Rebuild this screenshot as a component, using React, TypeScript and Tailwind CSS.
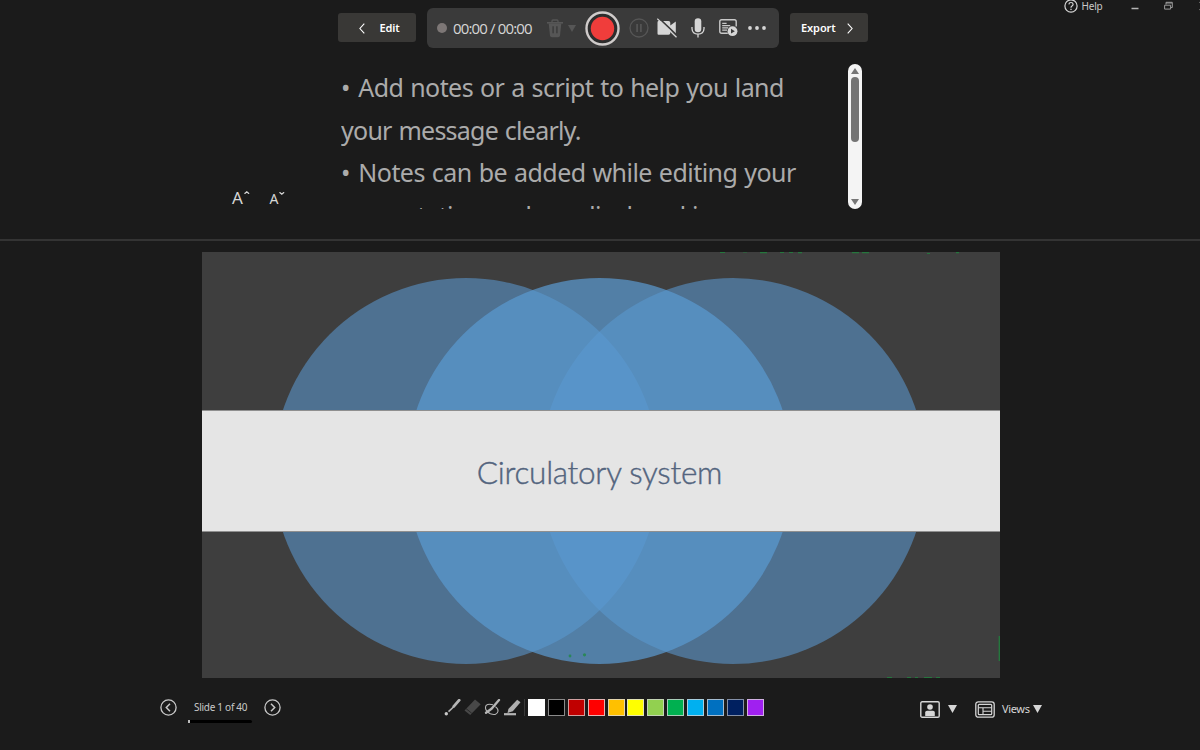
import type { ReactNode } from "react"

const inks = [
  { name: "White", fill: "bg-white", border: "border-white" },
  { name: "Black", fill: "bg-black", border: "border-[#8a8a8a]" },
  { name: "Dark red", fill: "bg-[#c00000]", border: "border-[#d0a0a0]" },
  { name: "Red", fill: "bg-[#ff0000]", border: "border-[#e4b4b4]" },
  { name: "Orange", fill: "bg-[#ffc000]", border: "border-[#e4d6ae]" },
  { name: "Yellow", fill: "bg-[#ffff00]", border: "border-[#e4e4b4]" },
  { name: "Light green", fill: "bg-[#92d050]", border: "border-[#c4d4b4]" },
  { name: "Green", fill: "bg-[#00b050]", border: "border-[#a8cdb8]" },
  { name: "Light blue", fill: "bg-[#00b0f0]", border: "border-[#a8cede]" },
  { name: "Blue", fill: "bg-[#0070c0]", border: "border-[#a4bcd0]" },
  { name: "Dark blue", fill: "bg-[#002060]", border: "border-[#8490a8]" },
  { name: "Purple", fill: "bg-[#a020f0]", border: "border-[#d0b0e2]" },
]

function Caret({ className }: { className: string }) {
  return (
    <svg className={className} viewBox="0 0 8 8" preserveAspectRatio="none" fill="currentColor">
      <path d="M0 0h8L4 8z" />
    </svg>
  )
}

function ArrowCircle({ flip = false }: { flip?: boolean }) {
  return (
    <svg
      className={flip ? "size-[17px] rotate-180" : "size-[17px]"}
      viewBox="0 0 17 17"
      fill="none"
      stroke="#c9c9c9"
      strokeWidth={1.3}
    >
      <circle cx="8.5" cy="8.5" r="7.6" />
      <path d="M10 4.7 6.3 8.5 10 12.3" strokeWidth={1.5} />
    </svg>
  )
}

function NavButton({ children }: { children: ReactNode }) {
  return (
    <button className="mt-[13px] flex h-[29px] w-[78px] shrink-0 items-center rounded-[3px] bg-[#393836] pt-px font-['Noto_Sans'] text-[11px] font-semibold tracking-[-0.1px] text-white">
      {children}
    </button>
  )
}

function Toolbar() {
  return (
    <div className="mr-[11px] mt-2 ml-[11px] flex h-[40px] w-[352px] shrink-0 items-center rounded-md bg-[#3a3a3a]">
      <span className="ml-[9.5px] size-[10.5px] shrink-0 rounded-full bg-[#7d7776]" />
      <span className="ml-[6px] w-[93.5px] shrink-0 whitespace-nowrap pt-px font-['Open_Sans'] text-[15px] tracking-[-0.85px] text-[#d6d6d6]">
        00:00 / 00:00
      </span>
      <svg className="h-[19px] w-4 shrink-0" viewBox="0 0 16 19" fill="none">
        <path d="M5 3.5V2Q5 1 6 1h4q1 0 1 1v1.5" stroke="#565656" strokeWidth={1.3} />
        <path d="M0 3h16v1.6H0z" fill="#565656" />
        <path d="M1.7 4.5h12.6L13 16.4q-.2 1.8-2 1.8H5q-1.8 0-2-1.8z" fill="#565656" />
        <path d="M6.1 7.2v7M9.9 7.2v7" stroke="#3a3a3a" strokeWidth={1.4} />
      </svg>
      <Caret className="ml-[5px] h-[7px] w-2 shrink-0 text-[#565656]" />
      <svg className="ml-[9px] size-[35px] shrink-0" viewBox="0 0 35 35">
        <circle cx="17.5" cy="17.5" r="16" fill="#2d2d2d" stroke="#cfcbca" strokeWidth={2.4} />
        <circle cx="17.5" cy="17.5" r="11.7" fill="#f03d3b" />
      </svg>
      <svg className="ml-[9px] size-5 shrink-0" viewBox="0 0 20 20" fill="none" stroke="#565656">
        <circle cx="10" cy="10" r="9" strokeWidth={1.3} />
        <path d="M8.1 6v8M11.9 6v8" strokeWidth={1.7} />
      </svg>
      <svg className="ml-[8.5px] h-5 w-5 shrink-0" viewBox="0 0 20 20">
        <path d="M1.5 3h10q1.8 0 1.8 1.8v2.8L18.8 3.4v13L13.3 12.8V15q0 1.8-1.8 1.8h-10Q.5 16.8.5 15.4V4.4Q.5 3 1.5 3z" fill="#d6d6d6" />
        <path d="M.9-.9 20.9 18.3" stroke="#3a3a3a" strokeWidth={1.6} />
        <path d="M.3.6 19.5 19.2" stroke="#d6d6d6" strokeWidth={1.3} />
      </svg>
      <svg className="ml-[13.5px] h-5 w-[14px] shrink-0" viewBox="0 0 14 20" fill="none">
        <rect x="3.7" y="0.3" width="6.6" height="14" rx="3.3" fill="#d6d6d6" />
        <path d="M1 9v1.8Q1.3 16 7 16.2 12.7 16 13 10.8V9M7 16v3.6" stroke="#d6d6d6" strokeWidth={1.3} />
      </svg>
      <svg className="ml-[14px] h-[18px] w-[19px] shrink-0" viewBox="0 0 19 18" fill="none" stroke="#c9c9c9">
        <path d="M8.8 14.2H2.6Q.8 14.2.8 12.4V2.6Q.8.8 2.6.8h12.8q1.8 0 1.8 1.8v5" strokeWidth={1.4} />
        <path d="M3.2 4.3h4.4M3.2 6.6h8M3.2 8.9h6M3.2 11.2h4.8" strokeWidth={1.2} />
        <circle cx="13.5" cy="12.2" r="4.9" fill="#d6d6d6" stroke="none" />
        <path d="M12 9.8v4.8l3.8-2.4z" fill="#3a3a3a" stroke="none" />
      </svg>
      <svg className="ml-2.5 h-1 w-[18px] shrink-0" viewBox="0 0 18 4" fill="#d6d6d6">
        <circle cx="2" cy="2" r="1.9" />
        <circle cx="9" cy="2" r="1.9" />
        <circle cx="16" cy="2" r="1.9" />
      </svg>
    </div>
  )
}

function WindowControls() {
  return (
    <div className="ml-[196px] flex h-[12px] items-center text-[#c9c9c9]">
      <svg className="size-[14px] shrink-0" viewBox="0 0 14 14" fill="none" stroke="#d6d6d6">
        <circle cx="7" cy="7" r="6.1" strokeWidth={1.2} />
        <path d="M4.9 5.4Q5 3.5 7 3.5t2.1 1.8Q9.1 6.4 8 7.1T7 8.8" strokeWidth={1.2} />
        <path d="M7 9.8v1.3" strokeWidth={1.3} />
      </svg>
      <span className="ml-[3.5px] w-[49px] shrink-0 pt-px font-['Noto_Sans'] text-[10px] tracking-[-0.2px]">Help</span>
      <svg className="h-3 w-2 shrink-0" viewBox="0 0 8 12">
        <path d="M.5 8.5h7" stroke="#b5b5b5" strokeWidth={1.5} />
      </svg>
      <svg className="ml-[25px] h-[10px] w-[9px] shrink-0" viewBox="0 0 9 10" fill="none" stroke="#9a9a9a">
        <path d="M2 3.5V1.3h6.3v5.2H7M2 2h6" />
        <path d="M.6 4.2h6v3.9h-6z" />
      </svg>
      <svg className="ml-[26px] h-[10px] w-[5px] shrink-0" viewBox="0 0 5 10">
        <path d="m0 1 5 4-5 4" fill="none" stroke="#6a6a6a" />
      </svg>
    </div>
  )
}

function Notes() {
  return (
    <section className="flex h-[179px] pl-[232px] pt-1">
      <div className="flex h-[145px] w-[109px] shrink-0 items-end font-['Noto_Sans'] text-[#d6d6d6]">
        <button className="flex w-[37.5px] items-start text-[17px] leading-[22px]">
          A
          <svg className="mt-[4px] ml-px h-[3px] w-[6px]" viewBox="0 0 6 3" fill="none" stroke="currentColor">
            <path d="m.5 2.8 2.3-2L5.1 2.8" strokeWidth={1.2} />
          </svg>
        </button>
        <button className="flex items-start text-[14px] leading-5">
          A
          <svg className="mt-[3px] ml-px h-[3px] w-[6px]" viewBox="0 0 6 3" fill="none" stroke="currentColor">
            <path d="m.5.2 2.3 2L5.1.2" strokeWidth={1.2} />
          </svg>
        </button>
      </div>
      <div className="h-[145px] w-[507px] shrink-0 overflow-hidden whitespace-nowrap pt-[2px] font-['Noto_Sans'] text-[25px] leading-[43px] tracking-[-0.57px] [word-spacing:1px] text-[#ababab]">
        <p>
          <span className="mr-[1.5px]">•</span> Add notes or a script to help you land
        </p>
        <p className="tracking-[-0.75px]">your message clearly.</p>
        <p className="-mt-px tracking-[-0.54px]">
          <span className="mr-[1.5px]">•</span> Notes can be added while editing your
        </p>
        <p className="tracking-[-0.76px]">presentation and are displayed in</p>
      </div>
      <div className="flex h-[145px] w-[14px] flex-col items-center rounded-full bg-[#f4f4f4] py-1 text-[#767676]">
        <Caret className="h-[6px] w-2 shrink-0 rotate-180" />
        <div className="mt-[3px] h-[65px] w-2 rounded-full bg-[#747474]" />
        <Caret className="mt-auto h-[6px] w-2 shrink-0" />
      </div>
    </section>
  )
}

function Slide() {
  return (
    <main className="relative ml-[202px] mt-[11px] h-[426px] w-[798px] bg-[#3e3e3e]">
      <svg className="h-full w-full" viewBox="0 0 798 426" fill="#5b9bd5">
        <circle cx="264" cy="219" r="193" fillOpacity={0.55} />
        <circle cx="531" cy="219" r="193" fillOpacity={0.55} />
        <circle cx="397.5" cy="219" r="193" fill="#5a99d1" fillOpacity={0.71} />
        <g fill="#1d8a3e" fillOpacity={0.75}>
          <path d="M518 0h5v1h-5zM541 0h4v.6h-4zM558 0h7v1.3h-7zM578 0h4v1h-4zM587 0h4v1h-4zM596 0h4v1.2h-4zM650 0h7v1.3h-7zM660 0h7v1.3h-7zM725 1h3v1h-3zM754 0h3v1.3h-3z" />
          <path d="M685 425h5v1h-5zM705 425h4v1h-4zM713 425h3v1h-3zM722 425h8v1h-8zM734 425h4v1h-4zM796.6 384h1.4v25h-1.4z" />
          <circle cx="368" cy="404" r="1.4" />
          <circle cx="382.5" cy="402.8" r="1.6" />
        </g>
      </svg>
      <div className="absolute inset-x-0 top-[158px] flex h-[122px] items-center justify-center border-y border-[#8f8f8f] bg-[#e5e5e5]">
        <h1 className="-ml-[3px] mt-[3px] whitespace-nowrap font-['Lato'] text-[31.5px] font-light tracking-[-0.28px] text-[#53647e] [-webkit-text-stroke:0.4px_#53647e]">
          Circulatory system
        </h1>
      </div>
    </main>
  )
}

function Footer() {
  return (
    <footer className="flex h-[72px] pl-[160px] pt-[21px] font-['Noto_Sans'] text-[#c9c9c9]">
      <div className="flex w-[284px] shrink-0">
        <ArrowCircle />
        <div className="ml-[11px] w-16">
          <div className="pl-[6px] text-[10px] leading-[17px] tracking-[-0.28px] whitespace-nowrap">Slide 1 of 40</div>
          <div className="mt-1 h-[3px] rounded-full bg-black">
            <div className="h-full w-[2px] bg-[#bdbdbd]" />
          </div>
        </div>
        <div className="ml-[12px]">
          <ArrowCircle flip />
        </div>
      </div>
      <svg className="h-[18px] w-[84px] shrink-0" viewBox="0 0 84 18" fill="none" stroke="#b5b5b5">
        <path d="m15.2 1.2-5.4 6.2" strokeWidth={2.8} strokeLinecap="round" />
        <path d="m9.5 8-5 4.7" strokeWidth={1.6} />
        <circle cx="2.3" cy="14.7" r="1.7" fill="#c9c9c9" stroke="none" />
        <path d="M31 0.5 36.7 5.2 26.2 16 20.5 11.4z" fill="#484848" stroke="none" />
        <path d="m22 9.6 5.8 4.7" stroke="#292929" />
        <path d="m55 1-7.5 8.8-5.5 4" strokeWidth={2.3} strokeLinecap="round" />
        <path d="M49 5.7Q42 4.2 41.5 8t4.8 6.8q6.8 2.2 7.7-2.6.4-2.5-2.6-4.6" strokeWidth={1.1} />
        <path d="m73.2.8 3.3 2.5-7.7 9-5.3 1.6.9-4z" fill="#b0b0b0" stroke="none" />
        <path d="M60 15.2h12" strokeWidth={2.2} />
        <path d="M80.5 0v17" stroke="#3a3a3a" />
      </svg>
      <div className="flex w-[392px] shrink-0 gap-[2.9px]">
        {inks.map((ink) => (
          <button key={ink.name} aria-label={ink.name} className={`size-[17px] border ${ink.fill} ${ink.border}`} />
        ))}
      </div>
      <div className="mt-[2px] flex h-4 items-center text-[#d6d6d6]">
        <svg className="h-[17px] w-5" viewBox="0 0 20 17" fill="none">
          <rect x="0.8" y="0.8" width="18.4" height="15.4" rx="1.3" stroke="currentColor" strokeWidth={1.4} />
          <circle cx="10" cy="6" r="2.8" fill="currentColor" />
          <path d="M5.2 15v-3.4q0-1.8 1.8-1.8h6q1.8 0 1.8 1.8V15z" fill="currentColor" />
        </svg>
        <Caret className="ml-2 h-2 w-[9px]" />
        <svg className="ml-[18px] h-[17px] w-5" viewBox="0 0 20 17" fill="none" stroke="currentColor">
          <rect x="0.8" y="0.8" width="18.4" height="15.4" rx="2.5" strokeWidth={1.3} />
          <rect x="3.3" y="3.3" width="13.4" height="10.4" rx="1" strokeWidth={1.2} />
          <path d="M3.3 6.7h13.4M8 6.7v7M8 10.2h8.7" strokeWidth={1.1} />
        </svg>
        <span className="ml-[7px] w-[31px] whitespace-nowrap text-[11px] tracking-[-0.35px]">Views</span>
        <Caret className="h-2 w-[9px]" />
      </div>
    </footer>
  )
}

export default function App() {
  return (
    <div className="flex h-[750px] w-[1200px] flex-col overflow-hidden bg-[#1b1b1b]">
      <header className="flex h-[60px] shrink-0 pl-[338px]">
        <NavButton>
          <svg className="ml-[21px] mr-[14.5px] h-[11px] w-[6px]" viewBox="0 0 6 11" fill="none" stroke="currentColor">
            <path d="M5.3.7.9 5.5l4.4 4.8" strokeWidth={1.1} />
          </svg>
          Edit
        </NavButton>
        <Toolbar />
        <NavButton>
          <span className="ml-[11px] w-[46px] text-left">Export</span>
          <svg className="h-[11px] w-[6px]" viewBox="0 0 6 11" fill="none" stroke="currentColor">
            <path d="m.7.7 4.4 4.8-4.4 4.8" strokeWidth={1.1} />
          </svg>
        </NavButton>
        <WindowControls />
      </header>
      <Notes />
      <div className="h-[2px] shrink-0 bg-[#343434]" />
      <Slide />
      <Footer />
    </div>
  )
}
